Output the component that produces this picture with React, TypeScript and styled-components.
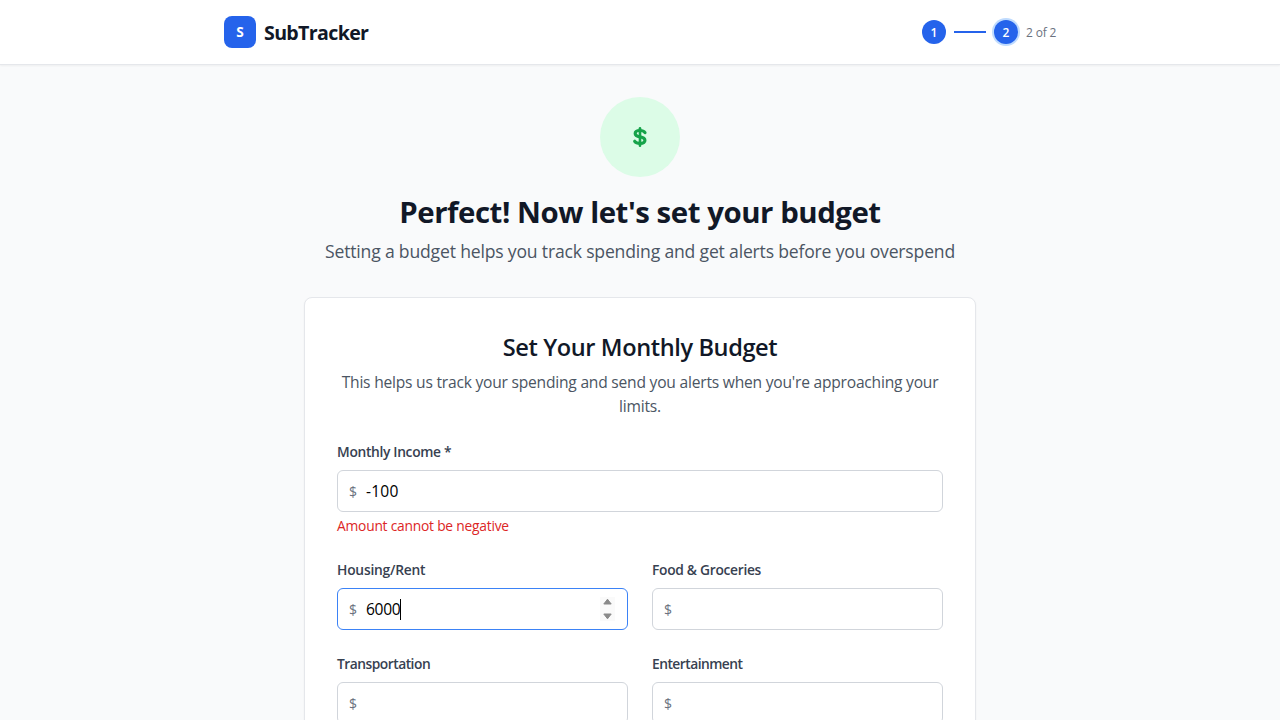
import React from "react";
import styled, { createGlobalStyle } from "styled-components";

const GlobalStyle = createGlobalStyle`
  *, *::before, *::after { box-sizing: border-box; }
  html, body { margin: 0; padding: 0; }
  body {
    background: #f9fafb;
    color: #111827;
    font-family: "Segoe UI", "Open Sans", "Noto Sans", sans-serif;
    overflow: hidden;
  }
  h1, h2, p { margin: 0; }
`;

/* Single line of text with its own tracking */
const Line = styled.span<{ $track?: number }>`
  letter-spacing: ${(p) => p.$track ?? 0}px;
  white-space: nowrap;
`;

const Page = styled.div`
  height: 720px;
  overflow: hidden;
`;

const Header = styled.header`
  height: 65px;
  background: #fff;
  border-bottom: 1px solid #e5e7eb;
  box-shadow: 0 1px 2px rgba(0, 0, 0, 0.05);
`;

const HeaderInner = styled.div`
  max-width: 896px;
  height: 64px;
  margin: 0 auto;
  padding: 0 32px;
  display: flex;
  align-items: center;
  justify-content: space-between;
`;

const Brand = styled.div`
  display: flex;
  align-items: center;
  gap: 8px;
`;

const BrandName = styled.div`
  padding-top: 2px;
  font-size: 19.6px;
  line-height: 28px;
  font-weight: 700;
`;

const BrandMark = styled.div`
  width: 32px;
  height: 32px;
  border-radius: 8px;
  background: #2563eb;
  color: #fff;
  font-size: 13.6px;
  line-height: 20px;
  font-weight: 700;
  display: flex;
  align-items: center;
  justify-content: center;
`;

const Steps = styled.div`
  display: flex;
  align-items: center;
  gap: 8px;
  font-size: 12px;
  line-height: 16px;
`;

const StepCount = styled.div`
  width: 30px;
  padding-top: 2px;
  color: #6b7280;
`;

const StepDot = styled.div<{ $current?: boolean }>`
  width: 24px;
  height: 24px;
  padding-top: 1px;
  border-radius: 50%;
  background: #2563eb;
  color: #fff;
  font-weight: 600;
  display: flex;
  align-items: center;
  justify-content: center;
  box-shadow: ${(p) => (p.$current ? "0 0 0 2px #bfdbfe" : "none")};
`;

const StepBar = styled.div`
  width: 32px;
  height: 2px;
  background: #2563eb;
`;

const Main = styled.main`
  width: 672px;
  margin: 0 auto;
  padding-top: 32px;
`;

const Hero = styled.section`
  display: flex;
  flex-direction: column;
  align-items: center;
  text-align: center;
  margin-bottom: 32px;
`;

const HeroIcon = styled.div`
  width: 80px;
  height: 80px;
  border-radius: 50%;
  background: #dcfce7;
  display: flex;
  align-items: center;
  justify-content: center;
  margin-bottom: 16px;
`;

const Title = styled.h1`
  padding-top: 1px;
  font-size: 29.4px;
  line-height: 36px;
  font-weight: 700;
  margin-bottom: 7px;
`;

const Subtitle = styled.p`
  font-size: 17.6px;
  line-height: 28px;
  color: #4b5563;
`;

const Card = styled.section`
  background: #fff;
  border: 1px solid #e5e7eb;
  border-radius: 8px;
  box-shadow: 0 1px 2px rgba(0, 0, 0, 0.05);
  padding: 32px;
`;

const CardHead = styled.div`
  text-align: center;
  margin-bottom: 24px;
`;

const CardTitle = styled.h2`
  padding-top: 1px;
  font-size: 23.6px;
  line-height: 32px;
  font-weight: 600;
  margin-bottom: 7px;
`;

const CardText = styled.p`
  font-size: 15.6px;
  line-height: 24px;
  color: #4b5563;
`;

const Fields = styled.div`
  display: grid;
  grid-template-columns: 1fr 1fr;
  gap: 24px;
`;

const FieldBox = styled.div<{ $wide?: boolean }>`
  grid-column: ${(p) => (p.$wide ? "1 / -1" : "auto")};
  display: flex;
  flex-direction: column;
`;

const Label = styled.div`
  font-size: 13.8px;
  line-height: 20px;
  font-weight: 600;
  color: #374151;
  margin-bottom: 8px;
`;

const InputBox = styled.div<{ $focused?: boolean }>`
  height: 42px;
  border: 1px solid ${(p) => (p.$focused ? "#3b82f6" : "#d1d5db")};
  border-radius: 6px;
  background: #fff;
  padding: 0 12px 0 11px;
  display: flex;
  align-items: center;
`;

const Currency = styled.span`
  width: 17px;
  padding-top: 1px;
  font-size: 14px;
  line-height: 20px;
  color: #6b7280;
`;

const Value = styled.span`
  font-size: 15.6px;
  line-height: 24px;
  color: #000;
`;

const Caret = styled.span`
  width: 1px;
  height: 21px;
  background: #000;
`;

const Spinner = styled.svg`
  width: 15px;
  height: 24px;
  margin-left: auto;
`;

const ErrorText = styled.p`
  margin-top: 4px;
  font-size: 13.8px;
  line-height: 20px;
  color: #dc2626;
`;

type FieldProps = {
  label: string;
  track?: number;
  value?: string;
  valueTrack?: number;
  wide?: boolean;
  focused?: boolean;
  error?: string;
};

function Field({ label, track, value, valueTrack, wide, focused, error }: FieldProps) {
  return (
    <FieldBox $wide={wide}>
      <Label><Line $track={track}>{label}</Line></Label>
      <InputBox $focused={focused}>
        <Currency>$</Currency>
        {value && <Value><Line $track={valueTrack}>{value}</Line></Value>}
        {focused && <Caret />}
        {focused && (
          <Spinner viewBox="0 0 15 24">
            <rect width="15" height="24" fill="#fafafa" />
            <path d="M3.8 7 L7.5 2.2 L11.2 7 Z M3.8 17 L7.5 21.8 L11.2 17 Z" fill="#8a8a8a" stroke="#8a8a8a" strokeWidth="1" strokeLinejoin="round" />
          </Spinner>
        )}
      </InputBox>
      {error && <ErrorText><Line $track={-0.22}>{error}</Line></ErrorText>}
    </FieldBox>
  );
}

export default function App() {
  return (
    <Page>
      <GlobalStyle />
      <Header>
        <HeaderInner>
          <Brand>
            <BrandMark>S</BrandMark>
            <BrandName><Line $track={-0.65}>SubTracker</Line></BrandName>
          </Brand>
          <Steps>
            <StepDot>1</StepDot>
            <StepBar />
            <StepDot $current>2</StepDot>
            <StepCount><Line $track={-0.15}>2 of 2</Line></StepCount>
          </Steps>
        </HeaderInner>
      </Header>
      <Main>
        <Hero>
          <HeroIcon>
            <svg width="16" height="22" viewBox="0 0 16 22" fill="none" stroke="#16a34a" strokeLinecap="round">
              <path d="M13 6.6 C11.8 4.9 10 4.5 8 4.5 C5.2 4.5 3.2 5.5 3.2 7.5 C3.2 9.8 5.6 10.4 8 10.8 C10.5 11.2 12.9 11.9 12.9 14.2 C12.9 16.4 10.7 17.4 8 17.4 C5.6 17.4 3.8 16.9 2.7 15.3" strokeWidth="3.2" />
              <path d="M8 2.2 V19.8" strokeWidth="2.6" />
            </svg>
          </HeroIcon>
          <Title><Line $track={-0.45}>Perfect! Now let's set your budget</Line></Title>
          <Subtitle><Line $track={-0.19}>Setting a budget helps you track spending and get alerts before you overspend</Line></Subtitle>
        </Hero>
        <Card>
          <CardHead>
            <CardTitle><Line $track={-0.4}>Set Your Monthly Budget</Line></CardTitle>
            <CardText>
              <Line $track={-0.22}>This helps us track your spending and send you alerts when you're approaching your</Line>
              <br />
              <Line $track={-0.22}>limits.</Line>
            </CardText>
          </CardHead>
          <Fields>
            <Field wide label="Monthly Income *" track={-0.33} value="-100" valueTrack={0.2} error="Amount cannot be negative" />
            <Field label="Housing/Rent" track={-0.22} value="6000" valueTrack={-0.3} focused />
            <Field label="Food & Groceries" track={-0.3} />
            <Field label="Transportation" track={-0.5} />
            <Field label="Entertainment" track={-0.52} />
          </Fields>
        </Card>
      </Main>
    </Page>
  );
}
